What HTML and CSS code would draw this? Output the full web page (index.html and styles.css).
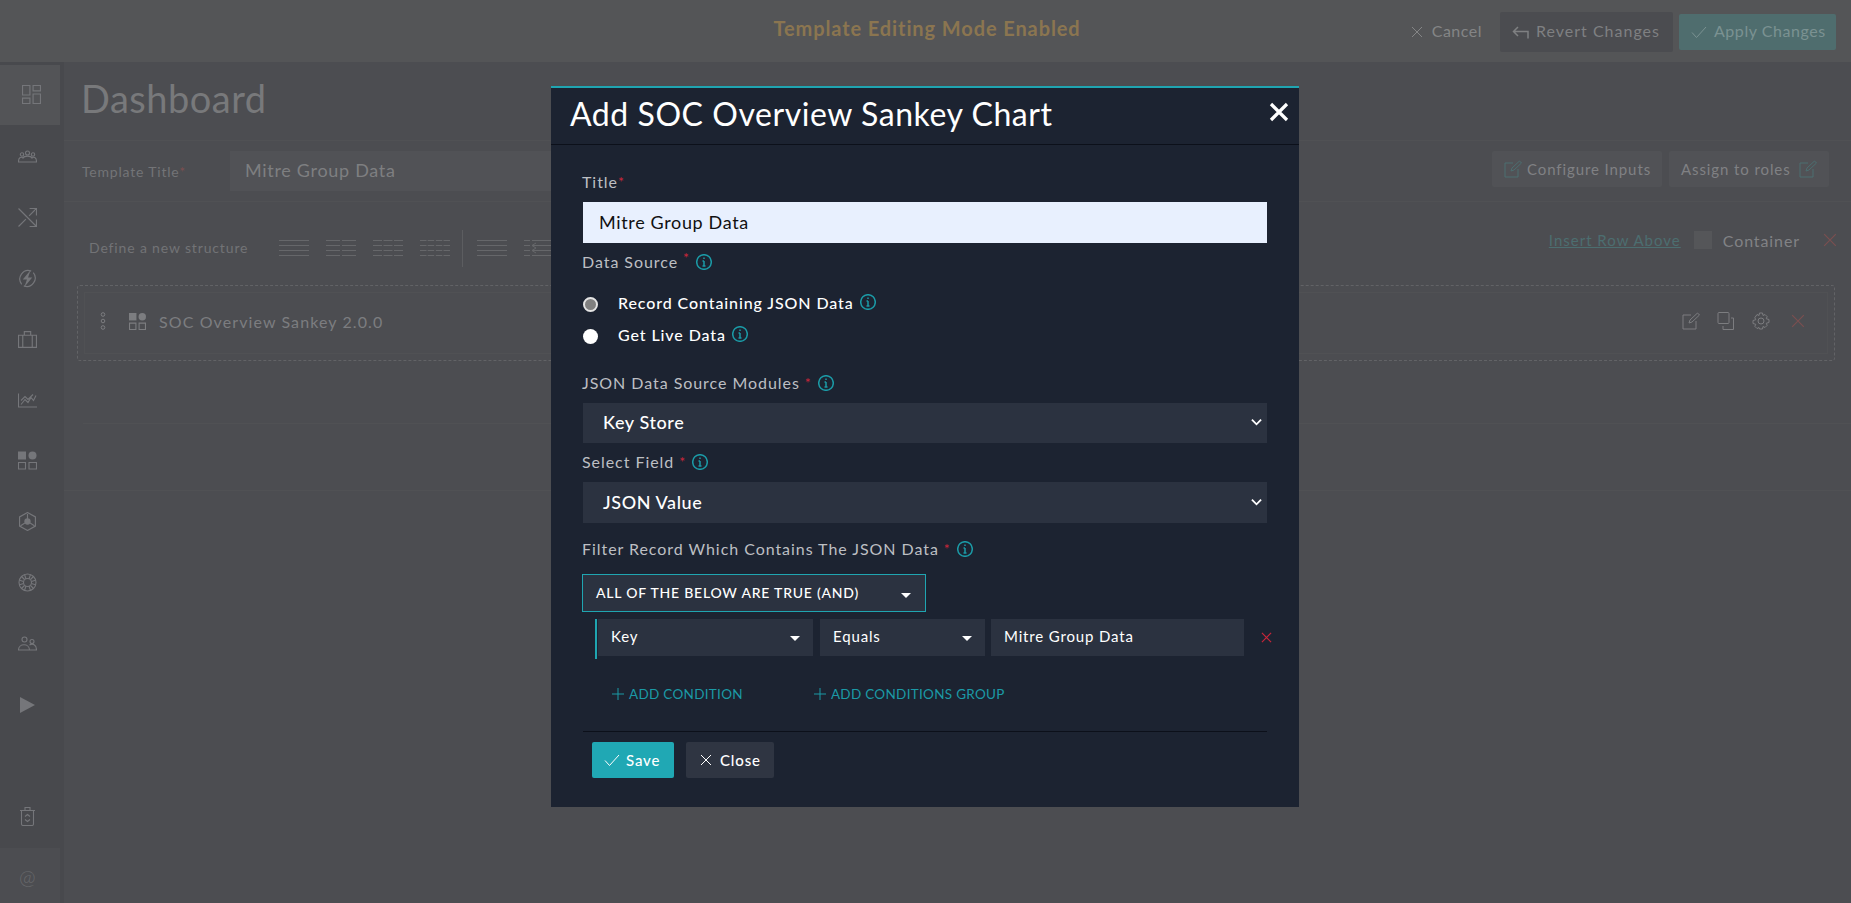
FILE: index.html
```html
<!DOCTYPE html>
<html lang="en">
<head>
    <meta charset="UTF-8">
    <title>Add SOC Overview Sankey Chart</title>
    <link rel="stylesheet" href="styles.css">
</head>
<body>
    <header class="topbar">
        <div></div>
        <div class="mode-text">Template Editing Mode Enabled</div>
        <div class="top-actions">
            <a class="cancel"><svg class="ic12" viewBox="0 0 12 12"><path d="M1 1l10 10M11 1L1 11"/></svg>Cancel</a>
            <a class="revert"><svg class="ic17" viewBox="0 0 17 14"><path d="M16 13.500V6.500H2M6 2L1.500 6.500 6 11"/></svg>Revert Changes</a>
            <a class="apply"><svg class="ic16" viewBox="0 0 16 14"><path d="M1 7.500l4.500 5L15 2"/></svg>Apply Changes</a>
        </div>
    </header>

    <div class="page">
        <nav class="sidebar">
            <a class="nav-item active"><svg viewBox="0 0 18 18"><path d="M.5.500h7v9h-7zM10.500.500h7v5h-7zM.5 12.500h7v5h-7zM10.500 8.500h7v9h-7z"/></svg></a>
            <a class="nav-item"><svg class="wide" viewBox="0 0 19 12"><circle cx="4" cy="4" r="1.700"/><circle cx="9.500" cy="2.500" r="2"/><circle cx="15" cy="4" r="1.700"/><path d="M.5 11c0-4.500 3-5 4.500-3.500 1-2.500 8-2.500 9 0 1.500-1.500 4.500-1 4.500 3.500M0 11.500h19"/></svg></a>
            <a class="nav-item"><svg viewBox="0 0 18 18"><path d="M.5.500l17 17M.5 17.500l7-7M10.500 7.500l7-7M11 .5h6.500V7M17.500 11v6.500H11"/></svg></a>
            <a class="nav-item"><svg viewBox="0 0 18 18"><path d="M3.500 14.500a8 8 0 0 1 9-12.500M14.500 3.500a8 8 0 0 1-9 12.500"/><path class="solid" d="M12 1L4.500 10h4L6 17l7.500-9h-4z"/></svg></a>
            <a class="nav-item"><svg viewBox="0 0 18 16"><path d="M.5 4h17v11.500H.5zM6 4V.5h6V4M4.500 4v11.500M13.500 4v11.500"/></svg></a>
            <a class="nav-item"><svg viewBox="0 0 19 14"><path d="M.5 0v13.500H19M3 11l4-5 3 3 3-5 2.500 3L18 2M3 7l4-4 3 3 5-5"/></svg></a>
            <a class="nav-item"><svg viewBox="0 0 19 18"><rect class="solid" x="0" y="0" width="8" height="8"/><circle class="solid" cx="14.500" cy="4" r="4"/><path d="M.5 11h7v6.500h-7zM11 11h7.500v6.500H11z"/></svg></a>
            <a class="nav-item"><svg viewBox="0 0 18 18"><path d="M9 .5l7.500 4.200v8.600L9 17.500l-7.500-4.200V4.700zM9 2v5M2.500 13l4-2.500M15.500 13l-4-2.500"/><circle class="solid" cx="9" cy="9" r="3"/></svg></a>
            <a class="nav-item"><svg viewBox="0 0 19 18"><circle cx="9.500" cy="9" r="8.500"/><circle cx="9.500" cy="9" r="4"/><path d="M3.500 3l3 3M6.500 1l1.500 4.500M1 6.500l4.500 1.500M15.500 3l-3 3M12.500 1L11 5.500M18 6.500L13.500 8M3.500 15l3-3M6.500 17L8 12.500M1 11.500L5.500 10M15.500 15l-3-3M12.500 17L11 12.500M18 11.500L13.500 10"/></svg></a>
            <a class="nav-item"><svg viewBox="0 0 19 14"><circle cx="6.500" cy="3" r="2.500"/><circle cx="14" cy="5" r="2"/><path d="M.5 13.500c0-7 11-7 11 0zM11.500 8.500c3-2 7-.5 7 5h-7"/></svg></a>
            <a class="nav-item play"><svg viewBox="0 0 15 16"><path class="solid" d="M0 0l15 8-15 8z"/></svg></a>
            <a class="nav-item trash"><svg viewBox="0 0 16 19"><path d="M.5 3.500h15M2 3.500V17a1.500 1.500 0 0 0 1.500 1.500h9A1.500 1.500 0 0 0 14 17V3.500M5.500 3.500V.5h5v3M10.500 9.500L8 7.500 5.500 9.500M5.500 12.500L8 14.500l2.500-2"/></svg></a>
            <a class="nav-item at">@</a>
        </nav>

        <main class="main">
            <h1 class="page-title">Dashboard</h1>

            <div class="template-row">
                <label class="template-label">Template Title<span class="req">*</span></label>
                <div class="template-input">Mitre Group Data</div>
                <div class="template-actions">
                    <a class="ghost-btn configure"><svg class="ic18 teal" viewBox="0 0 18 18"><path d="M9 3H1v14h13V9M7 11l1-3 7.500-7 2 2-7.500 7z"/></svg>Configure Inputs</a>
                    <a class="ghost-btn assign">Assign to roles<svg class="ic18 teal" viewBox="0 0 18 18"><path d="M9 3H1v14h13V9M7 11l1-3 7.500-7 2 2-7.500 7z"/></svg></a>
                </div>
            </div>

            <div class="structure-row">
                <span class="structure-label">Define a new structure</span>
                <div class="structure-icons">
                    <svg class="lines" viewBox="0 0 30 16"><path d="M0 .5h30M0 5.500h30M0 10.500h30M0 15.500h30"/></svg>
                    <svg class="lines" viewBox="0 0 30 16"><path d="M0 .5h14M16 .5h14M0 5.500h14M16 5.500h14M0 10.500h14M16 10.500h14M0 15.500h14M16 15.500h14"/></svg>
                    <svg class="lines" viewBox="0 0 30 16"><path d="M0 .5h9M10.500 .5h9M21 .5h9M0 5.500h9M10.500 5.500h9M21 5.500h9M0 10.500h9M10.500 10.500h9M21 10.500h9M0 15.500h9M10.500 15.500h9M21 15.500h9"/></svg>
                    <svg class="lines" viewBox="0 0 30 16"><path d="M0 .5h6.500M7.700 .5h6.500M15.800 .5h6.500M23.500 .5h6.500M0 5.500h6.500M7.700 5.500h6.500M15.800 5.500h6.500M23.500 5.500h6.500M0 10.500h6.500M7.700 10.500h6.500M15.800 10.500h6.500M23.500 10.500h6.500M0 15.500h6.500M7.700 15.500h6.500M15.800 15.500h6.500M23.500 15.500h6.500"/></svg>
                    <span class="divider"></span>
                    <svg class="lines" viewBox="0 0 30 16"><path d="M0 .5h30M0 5.500h30M0 10.500h30M0 15.500h30"/></svg>
                    <svg class="lines" viewBox="0 0 30 16"><path d="M0 .5h6M8 .5h22M0 5.500h6M8 5.500h22M0 10.500h6M8 10.500h22M0 15.500h6M8 15.500h22M12 3L8 5.500l4 2.500M12 8L8 10.500l4 2.500"/></svg>
                </div>
                <div class="row-tools">
                    <a class="insert-link">Insert Row Above</a>
                    <span class="check"></span>
                    <span class="container-label">Container</span>
                    <svg class="ic14 red" viewBox="0 0 12 12"><path d="M1 1l10 10M11 1L1 11"/></svg>
                </div>
            </div>

            <div class="widget-dashed">
                <div class="widget-box">
                    <svg class="dots" viewBox="0 0 6 18"><circle cx="3" cy="2.500" r="1.800"/><circle cx="3" cy="9" r="1.800"/><circle cx="3" cy="15.500" r="1.800"/></svg>
                    <svg class="widget-icon" viewBox="0 0 16 16"><rect class="solid" x="0" y="0" width="7" height="7"/><circle class="solid" cx="12.500" cy="3.500" r="3.500"/><path d="M.5 9.500h6v6h-6zM9.500 9.500h6v6h-6z"/></svg>
                    <span class="widget-name">SOC Overview Sankey 2.0.0</span>
                    <div class="widget-tools">
                        <svg class="ic18" viewBox="0 0 18 18"><path d="M9 3H1v14h13V9M7 11l1-3 7.500-7 2 2-7.500 7z"/></svg>
                        <svg class="ic18" viewBox="0 0 18 18"><path d="M2 .5h9a1 1 0 0 1 1 1v9a1 1 0 0 1-1 1H2a1 1 0 0 1-1-1v-9a1 1 0 0 1 1-1zM14 6h2.500v11.500H6V14"/></svg>
                        <svg class="ic18" viewBox="0 0 18 18"><circle cx="9" cy="9" r="3"/><path d="M7.500 1h3l.5 2.500 2-1 2.200 2.200-1 2 2.800.8v3l-2.800.8 1 2-2.200 2.200-2-1-.5 2.500h-3L7 15.500l-2 1-2.200-2.200 1-2L1 11.500v-3l2.800-.8-1-2L5 2.500l2 1z"/></svg>
                        <svg class="ic14 red" viewBox="0 0 12 12"><path d="M1 1l10 10M11 1L1 11"/></svg>
                    </div>
                </div>
            </div>

            <div class="empty-line first"></div>
            <div class="empty-line"></div>
        </main>
    </div>

    <div class="modal">
        <div class="modal-head">
            <h2>Add SOC Overview Sankey Chart</h2>
            <svg class="modal-close" viewBox="0 0 20 20"><path d="M2 2l16 16M18 2L2 18"/></svg>
        </div>
        <form class="modal-body">
            <label class="field-label title-label">Title<span class="req">*</span></label>
            <div class="text-input">Mitre Group Data</div>

            <label class="field-label source-label">Data Source <span class="req up">*</span>
                <svg class="info" viewBox="0 0 16 16"><circle cx="8" cy="8" r="7.300"/><path d="M8 7v5M6.500 12h3M6.500 7H8M8 3.500v1.500"/></svg>
            </label>
            <div class="radio-row first">
                <span class="radio checked"></span>
                <span class="radio-text">Record Containing JSON Data</span>
                <svg class="info" viewBox="0 0 16 16"><circle cx="8" cy="8" r="7.300"/><path d="M8 7v5M6.500 12h3M6.500 7H8M8 3.500v1.500"/></svg>
            </div>
            <div class="radio-row">
                <span class="radio"></span>
                <span class="radio-text">Get Live Data</span>
                <svg class="info" viewBox="0 0 16 16"><circle cx="8" cy="8" r="7.300"/><path d="M8 7v5M6.500 12h3M6.500 7H8M8 3.500v1.500"/></svg>
            </div>

            <label class="field-label modules-label">JSON Data Source Modules <span class="req">*</span>
                <svg class="info" viewBox="0 0 16 16"><circle cx="8" cy="8" r="7.300"/><path d="M8 7v5M6.500 12h3M6.500 7H8M8 3.500v1.500"/></svg>
            </label>
            <div class="select-box">Key Store<svg class="chev" viewBox="0 0 12 8"><path d="M1 1.500l5 5 5-5"/></svg></div>

            <label class="field-label field-select-label">Select Field <span class="req">*</span>
                <svg class="info" viewBox="0 0 16 16"><circle cx="8" cy="8" r="7.300"/><path d="M8 7v5M6.500 12h3M6.500 7H8M8 3.500v1.500"/></svg>
            </label>
            <div class="select-box tall">JSON Value<svg class="chev" viewBox="0 0 12 8"><path d="M1 1.500l5 5 5-5"/></svg></div>

            <label class="field-label filter-label">Filter Record Which Contains The JSON Data <span class="req">*</span>
                <svg class="info" viewBox="0 0 16 16"><circle cx="8" cy="8" r="7.300"/><path d="M8 7v5M6.500 12h3M6.500 7H8M8 3.500v1.500"/></svg>
            </label>
            <div class="logic-box">ALL OF THE BELOW ARE TRUE (AND)<span class="caret"></span></div>

            <div class="cond-row">
                <div class="cond-field key">Key<span class="caret"></span></div>
                <div class="cond-field equals">Equals<span class="caret"></span></div>
                <div class="cond-field value">Mitre Group Data</div>
                <svg class="ic12 red cond-remove" viewBox="0 0 12 12"><path d="M1 1l10 10M11 1L1 11"/></svg>
            </div>

            <div class="add-row">
                <a class="add-link"><svg viewBox="0 0 12 12"><path d="M6 0v12M0 6h12"/></svg>ADD CONDITION</a>
                <a class="add-link"><svg viewBox="0 0 12 12"><path d="M6 0v12M0 6h12"/></svg>ADD CONDITIONS GROUP</a>
            </div>

            <div class="modal-foot">
                <a class="btn save"><svg class="ic16" viewBox="0 0 16 14"><path d="M1 7.500l4.500 5L15 2"/></svg>Save</a>
                <a class="btn close"><svg class="ic12" viewBox="0 0 12 12"><path d="M1 1l10 10M11 1L1 11"/></svg>Close</a>
            </div>
        </form>
    </div>
</body>
</html>
```

FILE: styles.css
```css
*{
    margin: 0;
    padding: 0;
    box-sizing: border-box;
}
html,body{
    height: 100%;
    overflow: hidden;
}
body{
    background: #4c4d51;
    color: #7c7d80;
    font-family: "Lato", "Liberation Sans", sans-serif;
    font-size: 14px;
    letter-spacing: .5px;
}
svg{
    fill: none;
    stroke: currentColor;
    stroke-width: 1;
    flex: none;
}
svg .solid{
    fill: currentColor;
    stroke: none;
}
.req{
    color: #c9263a;
}
.ic12{
    width: 12px;
    height: 12px;
}
.ic14{
    width: 14px;
    height: 14px;
}
.ic16{
    width: 16px;
    height: 14px;
}
.ic17{
    width: 17px;
    height: 14px;
    stroke-width: 1.500;
}
.ic18{
    width: 18px;
    height: 18px;
}
.red{
    color: #7b4f50;
}
.teal{
    color: #4c6e70;
}

/* top bar */
.topbar{
    height: 62px;
    background: #545557;
    display: grid;
    grid-template-columns: 1fr auto 1fr;
    align-items: center;
    padding-top: 2px;
}
.mode-text{
    color: #8b7550;
    font-size: 20px;
    font-weight: 700;
    letter-spacing: .9px;
    margin: 0 0 8px 3px;
}
.top-actions{
    display: flex;
    justify-content: flex-end;
    align-items: center;
    padding-right: 15px;
    font-size: 16px;
}
.top-actions a{
    display: flex;
    align-items: center;
    padding-bottom: 3px;
}
.top-actions svg{
    margin-top: 3px;
}
.cancel{
    gap: 9px;
    margin-right: 18px;
    color: #848586;
    letter-spacing: .5px;
}
.revert{
    gap: 7px;
    width: 173px;
    height: 40px;
    padding-left: 12px;
    margin-right: 6px;
    background: #4b4c50;
    border-radius: 2px;
    color: #7f8082;
    letter-spacing: 1px;
}
.apply{
    gap: 7px;
    width: 157px;
    height: 36px;
    padding-left: 12px;
    background: #4f6d6e;
    border-radius: 2px;
    color: #7b9292;
    letter-spacing: .55px;
}

/* page */
.page{
    display: flex;
    height: 841px;
}
.sidebar{
    width: 64px;
    background: #48494d;
    padding-top: 3px;
    display: flex;
    flex-direction: column;
    color: #75767a;
    flex: none;
}
.nav-item{
    width: 55px;
    height: 61px;
    display: flex;
    align-items: center;
    justify-content: center;
}
.nav-item svg{
    width: 19px;
    height: 19px;
    stroke-width: 1.100;
}
.nav-item.active{
    width: 60px;
    height: 60px;
    margin-bottom: 1px;
    background: #535457;
    padding-left: 2px;
}
.nav-item.play svg{
    width: 15px;
    height: 16px;
}
.nav-item.trash{
    margin-top: 51px;
}
.nav-item.at{
    width: 60px;
    height: 55px;
    margin-top: 1px;
    padding-right: 5px;
    background: #4c4d51;
    font-size: 20px;
    font-weight: 300;
    color: #68696c;
}
.main{
    flex: 1;
    min-width: 0;
}
.page-title{
    height: 79px;
    padding: 13px 0 0 17px;
    font-size: 38px;
    font-weight: 400;
    letter-spacing: .5px;
    line-height: 46px;
    color: #78797b;
    border-bottom: 1px solid #505154;
}
.template-row{
    height: 61px;
    display: flex;
    align-items: center;
    padding: 0 22px 0 18px;
    border-bottom: 1px solid #505154;
}
.template-label{
    width: 148px;
    font-size: 14px;
    letter-spacing: .8px;
    color: #737477;
}
.template-label .req{
    color: #7b4f50;
}
.template-input{
    width: 400px;
    height: 40px;
    padding: 0 15px 2px;
    display: flex;
    align-items: center;
    background: #515256;
    font-size: 18px;
    letter-spacing: .7px;
    color: #7e7f81;
}
.template-actions{
    margin-left: auto;
    margin-bottom: 4px;
    display: flex;
    gap: 7px;
    font-size: 15px;
    letter-spacing: .9px;
    white-space: nowrap;
}
.ghost-btn{
    height: 36px;
    padding: 0 12px;
    display: flex;
    align-items: center;
    gap: 5px;
    background: #515256;
    border-radius: 2px;
    color: #808184;
}
.ghost-btn.configure{
    width: 170px;
    padding-right: 0;
}
.ghost-btn.assign{
    width: 160px;
    justify-content: space-between;
}
.structure-row{
    height: 83px;
    display: flex;
    align-items: center;
    padding: 8px 14px 0 25px;
}
.structure-label{
    width: 190px;
    font-size: 14px;
    letter-spacing: .85px;
    color: #727376;
}
.structure-icons{
    display: flex;
    align-items: center;
    gap: 17px;
    color: #66676a;
    margin-top: 1px;
}
.lines{
    width: 30px;
    height: 16px;
}
.divider{
    width: 1px;
    height: 37px;
    background: #5c5d60;
    margin: 0 -3px 0 -5px;
}
.row-tools{
    margin-left: auto;
    margin-bottom: 15px;
    display: flex;
    align-items: center;
}
.insert-link{
    margin-left: 1px;
    color: #4c6e70;
    font-size: 15px;
    letter-spacing: 1px;
    text-decoration: underline;
}
.check{
    width: 18px;
    height: 18px;
    margin: 0 11px 0 13px;
    background: #555659;
}
.container-label{
    font-size: 16px;
    letter-spacing: .9px;
    color: #818285;
    margin-right: 23px;
}
.widget-dashed{
    margin: 0 16px 0 13px;
    height: 76px;
    padding: 6px;
    border: 1px dashed #626366;
    border-radius: 3px;
}
.widget-box{
    height: 62px;
    border: 1px solid #505154;
    display: flex;
    align-items: center;
    padding: 0 22px 4px 15px;
}
.dots{
    width: 6px;
    height: 18px;
    margin-right: 23px;
}
.widget-icon{
    width: 17px;
    height: 17px;
    margin-right: 13px;
}
.widget-name{
    font-size: 16px;
    letter-spacing: 1.100px;
}
.widget-tools{
    margin-left: auto;
    display: flex;
    align-items: center;
    gap: 17px;
}
.widget-tools .ic14{
    margin-left: 4px;
}
.empty-line{
    border-bottom: 1px solid #505154;
    height: 67px;
}
.empty-line.first{
    height: 63px;
    margin-left: 19px;
}

/* modal */
.modal{
    position: fixed;
    left: 551px;
    top: 86px;
    width: 748px;
    height: 721px;
    background: #1c2331;
    border-top: 2px solid #1fa5b1;
    color: #fff;
}
.modal-head{
    height: 57px;
    padding: 0 10px 6px 19px;
    display: flex;
    align-items: center;
    justify-content: space-between;
    border-bottom: 1px solid #0c101a;
}
.modal-head h2{
    font-size: 32px;
    font-weight: 400;
    letter-spacing: .55px;
}
.modal-close{
    width: 20px;
    height: 20px;
    stroke-width: 3.200;
    margin-top: -2px;
}
.modal-body{
    padding: 0 32px;
}
.field-label{
    display: flex;
    align-items: center;
    gap: 5px;
    margin-left: -1px;
    font-size: 16px;
    line-height: 20px;
    letter-spacing: .95px;
    color: #bdbfc3;
}
.field-label .req{
    font-size: 14px;
}
.req.up{
    margin-top: -8px;
}
.title-label{
    gap: 0;
    margin-top: 27px;
}
.info{
    width: 16px;
    height: 16px;
    color: #1b9aa6;
    margin-left: 1px;
    stroke-width: 1.500;
}
.text-input{
    height: 41px;
    margin-top: 10px;
    padding: 0 16px 2px;
    display: flex;
    align-items: center;
    background: #e8f0fe;
    color: #111;
    font-size: 18px;
    letter-spacing: .65px;
}
.source-label{
    margin-top: 9px;
}
.radio-row{
    display: flex;
    align-items: center;
    height: 20px;
    margin-top: 12px;
    font-size: 16px;
    font-weight: 500;
    letter-spacing: .9px;
}
.radio-row.first{
    margin-top: 20px;
}
.radio{
    width: 15px;
    height: 15px;
    border-radius: 50%;
    background: #fff;
    margin: 4px 20px 0 0;
    flex: none;
}
.radio.checked{
    background: #808080;
    border: 2px solid #e4e4e4;
}
.radio-text{
    margin-right: 5px;
}
.modules-label{
    margin-top: 29px;
}
.select-box{
    height: 40px;
    margin-top: 10px;
    padding: 0 5px 2px 20px;
    display: flex;
    align-items: center;
    justify-content: space-between;
    background: #2b3240;
    font-size: 18px;
    font-weight: 500;
    letter-spacing: .6px;
}
.select-box.tall{
    height: 41px;
    margin-top: 10px;
}
.chev{
    width: 11px;
    height: 8px;
    stroke-width: 2;
}
.field-select-label{
    margin-top: 9px;
}
.filter-label{
    margin-top: 16px;
}
.logic-box{
    width: 344px;
    height: 38px;
    margin: 15px 0 0 -1px;
    padding: 0 13px 2px;
    display: flex;
    align-items: center;
    justify-content: space-between;
    background: #2b3240;
    border: 1px solid #1fa5b1;
    font-size: 14px;
    font-weight: 500;
    letter-spacing: .78px;
}
.logic-box .caret{
    margin-right: 1px;
    margin-top: 6px;
}
.caret{
    width: 0;
    height: 0;
    margin-top: 5px;
    border-left: 5.500px solid transparent;
    border-right: 5.500px solid transparent;
    border-top: 5.500px solid #fff;
}
.cond-row{
    display: flex;
    gap: 7px;
    height: 40px;
    margin: 7px 0 0 12px;
    padding-left: 1px;
    border-left: 2px solid #1fa5b1;
    align-items: flex-start;
}
.cond-field{
    flex: none;
    height: 37px;
    padding: 0 13px 3px;
    display: flex;
    align-items: center;
    justify-content: space-between;
    background: #2b3240;
    font-size: 15px;
    letter-spacing: .85px;
}
.cond-field.key{
    width: 215px;
}
.cond-field.equals{
    width: 165px;
}
.cond-field.value{
    width: 253px;
    margin-left: -1px;
}
.cond-remove{
    color: #c9263a;
    width: 11px;
    height: 11px;
    margin: 13px 0 0 10px;
    stroke-width: 1.300;
}
.add-row{
    display: flex;
    gap: 71px;
    margin: 27px 0 0 29px;
    color: #1b9aa6;
    font-size: 13.500px;
    letter-spacing: .3px;
}
.add-link{
    display: flex;
    align-items: center;
    gap: 5px;
}
.add-link svg{
    width: 12px;
    height: 12px;
}
.modal-foot{
    display: flex;
    gap: 12px;
    margin-top: 29px;
    padding: 10px 9px 0;
    border-top: 1px solid #0c101a;
}
.btn{
    height: 36px;
    display: flex;
    align-items: center;
    border-radius: 2px;
    font-size: 15px;
    font-weight: 500;
    letter-spacing: .85px;
}
.btn.save{
    width: 82px;
    gap: 6px;
    padding-left: 12px;
    background: #20a8b4;
}
.btn.close{
    width: 88px;
    gap: 8px;
    padding-left: 14px;
    background: #2f3542;
}
```
